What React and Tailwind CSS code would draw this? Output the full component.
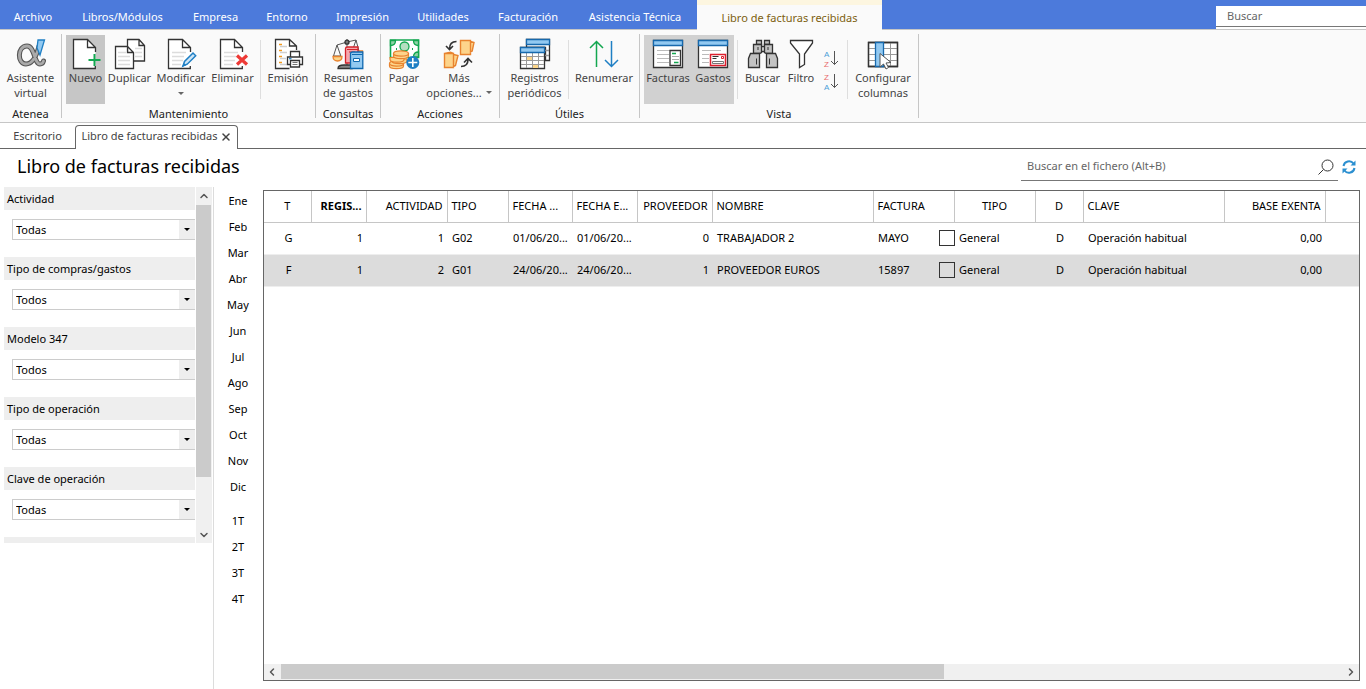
import { useState } from "react";
import { ChevronDown, ChevronLeft, ChevronRight, ChevronUp, X } from "lucide-react";

const INK = "#333333";
const BLUE = "#1f7fc4";
const SKY = "#92c9f1";
const GREEN = "#13a750";
const RED = "#ee3a36";
const ORANGE = "#e8832f";

function Svg({ children }) {
  return (
    <svg
      viewBox="0 0 32 32"
      className="h-8 w-8 shrink-0"
      fill="none"
      stroke={INK}
      strokeWidth="1.3"
      aria-hidden="true"
    >
      {children}
    </svg>
  );
}

function Sheet() {
  return (
    <>
      <path fill="#fff" stroke="none" d="M3.5 1.5h14l8 8v21h-22z" />
      <path d="M25.5 14V9.5l-8-8h-14v29h21.8v-2.5M17.5 1.5v8h8" />
      <path stroke="#dcdcdc" d="M7 14.5h14M7 18.5h12M7 22.500h11M7 26.500h9" />
    </>
  );
}

function AlphaIcon() {
  return (
    <Svg>
      <g fill="none" strokeLinecap="round">
        <path stroke="#555" strokeWidth="5" d="M24 8c-2 8-6 18-13 18-9 0-9-18 1-18 8 0 7 18 13 18 2 0 3-1 3.500-3" />
        <path stroke="#aaa" strokeWidth="2.800" d="M24 8c-2 8-6 18-13 18-9 0-9-18 1-18 8 0 7 18 13 18 2 0 3-1 3.500-3" />
      </g>
      <path d="M23 2h6.500l-4.500 15-3-7z" fill={SKY} stroke={BLUE} />
    </Svg>
  );
}

function NewIcon() {
  return (
    <Svg>
      <path fill="#fff" stroke="none" d="M3.500 1.500h14l8 8v21h-22z" />
      <path d="M25.500 14V9.500l-8-8h-14v29h21.800v-2.500M17.500 1.500v8h8" />
      <path stroke={GREEN} strokeWidth="2" d="M24.500 16v12M18.500 22h12" />
    </Svg>
  );
}

function CopyIcon() {
  return (
    <Svg>
      <path fill="#fff" d="M13.500 1.500H25l5.500 6v15.500h-17zM25 1.500v6h5.500" />
      <path fill="#fff" d="M1.500 8.500h12l6 6v16h-18zM13.500 8.500v6h6" />
      <path stroke="#dcdcdc" d="M4 14.500h8M4 18.500h12M4 22.500h12M4 26.500h12M21 10.500h7M21 14.500h7M21 18.500h7" />
    </Svg>
  );
}

function EditIcon() {
  return (
    <Svg>
      <Sheet />
      <path d="m18 28 1.500-4.500 8.500-8.500 2.700 2.700-8.500 8.500z" fill="#cfe6f7" stroke={BLUE} strokeWidth="1.500" />
      <path d="m18 28 2-1-1-1z" fill={BLUE} stroke={BLUE} />
    </Svg>
  );
}

function DeleteIcon() {
  return (
    <Svg>
      <Sheet />
      <path stroke={RED} strokeWidth="3.200" d="m20 17.500 10 9M30 17.500l-10 9" />
    </Svg>
  );
}

function PrintIcon() {
  return (
    <Svg>
      <path fill="#fff" stroke="none" d="M3.500 1.500h14l7 6.500v22.500h-21z" />
      <path d="M24.500 12V8l-7-6.500h-14v29h14M17.500 1.500V8h7" />
      <path stroke="#f39a1e" strokeWidth="1.500" d="M7 6.500h3M7 12.500h3M7 18.500h3M7 24.500h3" />
      <path stroke="#d0d0d0" d="M8 8.500h7M8 14.500h7M8 20.500h6M8 26.500h7" />
      <path fill="#fff" d="M18.500 19v-5.500h9V19M15.500 19h15v7.500h-15z" />
      <path fill="#fff" d="M18.500 22.500h9v6.500h-9z" />
      <path strokeWidth="1" stroke="#777" d="M20.500 24.500h5M20.500 26.500h5" />
      <path stroke={BLUE} d="M17 20.700h2.500" />
    </Svg>
  );
}

function BalanceIcon() {
  return (
    <Svg>
      <path d="M15 1v28M5 7l10-3 9-2M5 7 1.500 18h7.300zM24 2l-3 9M24 2l3.500 13" stroke="#555" strokeWidth="1" />
      <circle cx="15" cy="4.200" r="2" fill="#777" />
      <path d="M1 18.500h9c0 3-2 4.500-4.500 4.500S1 21.500 1 18.500z" fill="#fbd58a" stroke={ORANGE} />
      <path d="M6 30.500c0-3 3-3.500 6-3.500h8v3.500z" fill="#888" />
      <path d="M27 13h3.500v3" stroke={ORANGE} />
      <path d="M13.500 10.500c0-1 .8-1.500 2-1.500H26v16H13.500z" fill="#f6a6ab" stroke="#d3222a" />
      <path d="M15 11.500h11M17 14h6v3" stroke="#d3222a" strokeWidth="1" />
      <path d="M18.500 15.500c0-1 .8-1.500 2-1.500h10.300v16.500H18.500z" fill={SKY} stroke="#0f68b0" />
      <path d="M20 16.500h10.500" stroke="#0f68b0" strokeWidth="1" />
      <path d="M21.500 20.500h6v3h-6z" fill="#fff" stroke="#0f68b0" strokeWidth="1" />
    </Svg>
  );
}

function PayIcon() {
  return (
    <Svg>
      <path d="M2.500 2h28v17.500h-28z" fill="#fff" stroke={GREEN} strokeWidth="1.600" />
      <path d="M2.500 7.500c3 0 5-2 5-5h-5zM30.500 7.500c-3 0-5-2-5-5h5zM30.500 14c-3 0-5 2-5 5h5z" fill="#8fd3a6" stroke={GREEN} />
      <circle cx="16.500" cy="8.500" r="4.500" fill="#b5dfc1" stroke={GREEN} />
      <path d="M8 11h1M24 11h1" stroke={GREEN} strokeWidth="2" />
      <g fill="#fdd48b" stroke={ORANGE} strokeWidth="1.200">
        <path d="M1.500 26v2c0 3.500 14 3.500 14 0v-2z" />
        <ellipse cx="8.500" cy="25.500" rx="7" ry="2.600" />
        <path d="M4 21v2c0 3.500 15 3.500 15 0v-2z" />
        <path d="M2 19.500v2c0 3.500 14 3.500 14 0v-2z" />
        <path d="M5.500 15.500v2.500c0 3.500 15 3.500 15 0v-2.500z" />
        <ellipse cx="13" cy="15.500" rx="7.500" ry="2.700" />
      </g>
      <circle cx="24.800" cy="24.500" r="6.500" fill={BLUE} stroke="none" />
      <path d="M24.800 20v9M20.300 24.500h9" stroke="#fff" strokeWidth="1.600" />
    </Svg>
  );
}

function MoreIcon() {
  return (
    <Svg>
      <g fill="#fdd48b" stroke={ORANGE} strokeWidth="1.400">
        <path d="M17.500 2.500h10v14h-10zM27.500 3.500l3.500 1-1.800 8.500-1.700 1z" />
        <path d="M1.500 15.500h9v14h-9zM10.500 16.500l4.500 1-2.500 10-2 1zM1.500 15.500l6-1.200 3 1.200" />
      </g>
      <path d="M13.500 3.500C9 3.500 6.500 6 6.500 11M3 8l3.500 3.500L10 8M18 28.500c4.500 0 7-2 7-7M21 24.500l4-4 4 4" strokeWidth="1.600" />
    </Svg>
  );
}

function CalendarIcon() {
  return (
    <Svg>
      <path d="M7.500 1.500h23v21h-4v-13h-19z" fill="#fff" />
      <path d="M26 12.500h4M26 17.500h4" stroke="#999" />
      <path d="M7.500 1.500h23v5h-23z" fill={SKY} stroke="#1769ad" />
      <path d="M1.500 9.500h24v21h-24z" fill="#fff" />
      <path d="M8 22.500h5.500v-4H8zM14 30h5.500v-3.500H14z" fill="#fbd58a" stroke="none" />
      <path d="M2 18.500h23M2 22.500h23M2 26.500h23M7.500 15v15M13.500 15v15M19.500 15v15" stroke="#9a9a9a" strokeWidth="1" />
      <path d="M1.500 9.500h24v5h-24z" fill={SKY} stroke="#1769ad" />
    </Svg>
  );
}

function RenumberIcon() {
  return (
    <Svg>
      <path d="M8.500 29V3.500M2 10l6.500-6.500L15 10" stroke={GREEN} strokeWidth="1.500" />
      <path d="M23.500 3v25.500M17 22l6.500 6.500L30 22" stroke={BLUE} strokeWidth="1.500" />
    </Svg>
  );
}

function InvoiceWindowIcon() {
  return (
    <Svg>
      <path d="M1.500 2.500h29v27h-29z" fill="#fff" />
      <path d="M5 12.500h13M5 16.500h12M5 20.500h12M5 24.500h12" stroke="#bbb" strokeWidth="1" />
      <path d="M1.500 2.500h29v5h-29z" fill={SKY} stroke="#1769ad" />
      <path d="M18 12.500h10.500v15H18z" fill="#fff" />
      <path d="M20 15.500h4M22 24.500h4.500" stroke={GREEN} strokeWidth="1.500" />
      <path d="M20 18.500h7M20 21.500h7" stroke="#aaa" strokeWidth="1" />
    </Svg>
  );
}

function ExpenseWindowIcon() {
  return (
    <Svg>
      <path d="M1.500 2.500h29v27h-29z" fill="#fff" />
      <path d="M5 12.500h19M5 16.500h7M5 20.500h7M5 24.500h7" stroke="#bbb" strokeWidth="1" />
      <path d="M1.500 2.500h29v5h-29z" fill={SKY} stroke="#1769ad" />
      <path d="M13.500 16.500h15v11h-15z" fill="#fff" stroke="#dc1f2d" strokeWidth="1.500" />
      <path d="M15.500 18.500h6M15.500 20.500h4" strokeWidth="1" />
      <path d="M15.500 23.500h11v2h-11z" stroke="#777" strokeWidth="1" />
      <path d="M24.500 18.500h2v2h-2z" stroke="#dc1f2d" strokeWidth="1" />
    </Svg>
  );
}

function BinocularsIcon() {
  return (
    <Svg>
      <g fill="#c3c3c3">
        <path d="M9.500 2.500h5v4h-5zM17.500 2.500h5v4h-5z" />
        <path d="M14.500 8.500h3v5h-3z" fill="#fff" />
        <path d="M6.500 6.500h8v8l-2 1h-6zM17.500 6.500h8v9h-6l-2-1z" />
        <path d="M3.500 15.500h9v14h-11v-9zM19.500 15.500h9l2 5v9h-11z" />
      </g>
      <path d="M9.500 20.500v6M22.500 20.500v6M11 9v3M21 9v3" strokeWidth="1" />
    </Svg>
  );
}

function FunnelIcon() {
  return (
    <Svg>
      <path d="M5.500 2.500h22v2.500l-8 11v10.500l-5 3V16l-9-11z" fill="#fff" />
    </Svg>
  );
}

function ColumnsIcon() {
  return (
    <Svg>
      <path d="M1.500 4.500h29v24h-29z" fill="#fff" />
      <path d="M2 10.500h28M2 16.500h28M2 22.500h28M23.500 5v23" stroke="#999" strokeWidth="1" />
      <path d="M1.500 4.500h29v24h-29z" />
      <path d="M8.500 4.500h8v24h-8z" fill={SKY} stroke="#1769ad" />
      <path d="M13 15.500V29l3.500-3 2.500 5 2.500-1.500-2.500-4.500 5-.5z" fill="#fff" stroke="#555" strokeWidth="1" />
    </Svg>
  );
}

function SortIcon({ top, bottom }) {
  return (
    <svg viewBox="0 0 16 20" className="h-5 w-4" fill="none" aria-hidden="true">
      <g fontSize="8" fontFamily="Liberation Sans, sans-serif">
        <text x="1" y="8" fill={top === "A" ? "#4a9fd8" : "#e86a6a"}>
          {top}
        </text>
        <text x="1" y="18" fill={bottom === "A" ? "#4a9fd8" : "#e86a6a"}>
          {bottom}
        </text>
      </g>
      <path d="M11.500 2v13.500M8 12l3.500 3.500L15 12" stroke="#555" />
    </svg>
  );
}

function Caret() {
  return <span className="inline-block border-x-[3px] border-t-[3px] border-x-transparent border-t-[#666]" />;
}

function Tool({ icon, lines, width, caret, active }) {
  return (
    <button
      type="button"
      className={`flex h-[69px] flex-col items-center pt-[3px] text-[#444] ${width} ${active || ""}`}
    >
      {icon}
      {lines.map((line, i) => (
        <span key={line} className="flex h-[15px] items-center gap-1 whitespace-nowrap leading-[15px]">
          {line}
          {caret && i === 1 && <Caret />}
        </span>
      ))}
      {caret && lines.length === 1 && (
        <span className="flex h-4 items-center">
          <Caret />
        </span>
      )}
    </button>
  );
}

function Divider() {
  return <span className="mx-[3px] mt-[5px] h-[59px] w-px shrink-0 bg-[#dedede]" />;
}

function Group({ label, width, children }) {
  return (
    <section className={`flex shrink-0 flex-col border-r border-[#c6c6c6] ${width}`} aria-label={label}>
      <div className="flex h-[70px] pl-1 pt-px">{children}</div>
      <div className="text-center leading-[19px] text-[#222]">{label}</div>
    </section>
  );
}

const MENU = [
  ["Archivo", "w-[66px]"],
  ["Libros/Módulos", "w-[113px]"],
  ["Empresa", "w-[73px]"],
  ["Entorno", "w-[70px]"],
  ["Impresión", "w-[81px]"],
  ["Utilidades", "w-[80px]"],
  ["Facturación", "w-[90px]"],
  ["Asistencia Técnica", "w-[124px]"],
];

const FILTERS = [
  ["Actividad", "Todas"],
  ["Tipo de compras/gastos", "Todos"],
  ["Modelo 347", "Todos"],
  ["Tipo de operación", "Todas"],
  ["Clave de operación", "Todas"],
];

const MONTHS = ["Ene", "Feb", "Mar", "Abr", "May", "Jun", "Jul", "Ago", "Sep", "Oct", "Nov", "Dic"];
const QUARTERS = ["1T", "2T", "3T", "4T"];

const COLUMNS = [
  { title: "T", width: "w-[47px]", align: "text-center" },
  { title: "REGIS...", width: "w-[55px]", align: "text-right", bold: true },
  { title: "ACTIVIDAD", width: "w-[81px]", align: "text-right" },
  { title: "TIPO", width: "w-[61px]", align: "text-left" },
  { title: "FECHA ...", width: "w-[64px]", align: "text-left" },
  { title: "FECHA E...", width: "w-[65px]", align: "text-left" },
  { title: "PROVEEDOR", width: "w-[75px]", align: "text-right" },
  { title: "NOMBRE", width: "w-[161px]", align: "text-left" },
  { title: "FACTURA", width: "w-[81px]", align: "text-left" },
  { title: "TIPO", width: "w-[81px]", align: "text-center" },
  { title: "D", width: "w-12", align: "text-center" },
  { title: "CLAVE", width: "w-[141px]", align: "text-left" },
  { title: "BASE EXENTA", width: "w-[101px]", align: "text-right" },
];

const ROWS = [
  ["G", "1", "1", "G02", "01/06/20...", "01/06/20...", "0", "TRABAJADOR 2", "MAYO", "General", "D", "Operación habitual", "0,00"],
  ["F", "1", "2", "G01", "24/06/20...", "24/06/20...", "1", "PROVEEDOR EUROS", "15897", "General", "D", "Operación habitual", "0,00"],
];

function MenuBar() {
  return (
    <header className="flex h-[30px] border-b border-[#c6c6c6] bg-[#4c7adb] text-[11px] text-white">
      <nav className="flex">
        {MENU.map(([name, width]) => (
          <button key={name} type="button" className={`shrink-0 whitespace-nowrap pt-[6px] ${width}`}>
            {name}
          </button>
        ))}
        <button
          type="button"
          className="-mb-px w-[185px] shrink-0 whitespace-nowrap border-t-[5px] border-[#fdf6e0] bg-[#fafafa] pt-px text-[#7d5f10]"
        >
          Libro de facturas recibidas
        </button>
      </nav>
      <div className="ml-auto mt-[6px] w-[150px] bg-white">
        <input
          type="text"
          aria-label="Buscar"
          placeholder="Buscar"
          className="block h-[21px] w-full border-b border-[#777] px-[11px] pb-[2px] outline-none placeholder:text-[#666]"
        />
      </div>
    </header>
  );
}

function Ribbon() {
  return (
    <div className="flex h-[93px] border-b border-[#c6c6c6] bg-[#fafafa] pb-1 pt-1 text-[11px]">
      <Group label="Atenea" width="w-[62px]">
        <Tool icon={<AlphaIcon />} lines={["Asistente", "virtual"]} width="w-[53px]" />
      </Group>
      <Group label="Mantenimiento" width="w-[254px]">
        <Tool icon={<NewIcon />} lines={["Nuevo"]} width="w-[39px]" active="bg-[#c6c6c6]" />
        <Tool icon={<CopyIcon />} lines={["Duplicar"]} width="w-[49px]" />
        <Tool icon={<EditIcon />} lines={["Modificar"]} width="w-[54px]" caret />
        <Tool icon={<DeleteIcon />} lines={["Eliminar"]} width="w-[49px]" />
        <Divider />
        <Tool icon={<PrintIcon />} lines={["Emisión"]} width="w-[48px]" />
      </Group>
      <Group label="Consultas" width="w-[65px]">
        <Tool icon={<BalanceIcon />} lines={["Resumen", "de gastos"]} width="w-[56px]" />
      </Group>
      <Group label="Acciones" width="w-[119px]">
        <Tool icon={<PayIcon />} lines={["Pagar"]} width="w-[38px]" />
        <Tool icon={<MoreIcon />} lines={["Más", "opciones..."]} width="w-[72px]" caret />
      </Group>
      <Group label="Útiles" width="w-[140px]">
        <Tool icon={<CalendarIcon />} lines={["Registros", "periódicos"]} width="w-[61px]" />
        <Divider />
        <Tool icon={<RenumberIcon />} lines={["Renumerar"]} width="w-[64px]" />
      </Group>
      <Group label="Vista" width="w-[279px]">
        <Tool icon={<InvoiceWindowIcon />} lines={["Facturas"]} width="w-12" active="bg-[#d1d1d1]" />
        <Tool icon={<ExpenseWindowIcon />} lines={["Gastos"]} width="w-[42px]" active="bg-[#d1d1d1]" />
        <Divider />
        <Tool icon={<BinocularsIcon />} lines={["Buscar"]} width="w-[43px]" />
        <Tool icon={<FunnelIcon />} lines={["Filtro"]} width="w-[34px]" />
        <div className="flex w-[26px] flex-col items-center gap-[3px] pt-[14px]">
          <button type="button" aria-label="Orden ascendente">
            <SortIcon top="A" bottom="Z" />
          </button>
          <button type="button" aria-label="Orden descendente">
            <SortIcon top="Z" bottom="A" />
          </button>
        </div>
        <Divider />
        <Tool icon={<ColumnsIcon />} lines={["Configurar", "columnas"]} width="w-[64px]" />
      </Group>
    </div>
  );
}

function DocumentTabs() {
  return (
    <div className="flex h-[26px] border-b border-[#666] pt-[2px] text-[11px] text-[#444]">
      <button type="button" className="w-[75px] pb-px">
        Escritorio
      </button>
      <div className="-mb-px flex w-[163px] items-center justify-center gap-[2px] rounded-t border border-b-0 border-[#666] bg-white">
        <button type="button" className="whitespace-nowrap pb-[2px]">
          Libro de facturas recibidas
        </button>
        <button type="button" aria-label="Cerrar" className="pb-px">
          <X size={12} strokeWidth={3} />
        </button>
      </div>
    </div>
  );
}

function TitleRow() {
  return (
    <div className="flex h-[38px] items-start justify-between pl-[17px] pr-[9px]">
      <h1 className="pt-1 text-[18px] leading-[26px]">Libro de facturas recibidas</h1>
      <div className="flex items-center pt-1">
        <label className="mr-[3px] flex h-7 w-[317px] items-center border-b border-[#777] pl-[6px] pr-1">
          <input
            type="text"
            aria-label="Buscar en el fichero"
            placeholder="Buscar en el fichero (Alt+B)"
            className="min-w-0 flex-1 text-[11px] outline-none placeholder:text-[#666]"
          />
          <svg viewBox="0 0 16 16" className="h-4 w-4" fill="none" stroke="#333" aria-hidden="true">
            <circle cx="9.500" cy="6.500" r="5.500" />
            <path d="M5.500 10.500.5 15.500" />
          </svg>
        </label>
        <button type="button" aria-label="Actualizar">
          <svg viewBox="0 0 16 16" className="h-4 w-4" fill="none" stroke="#2b8fd0" strokeWidth="2" aria-hidden="true">
            <path d="M2.500 7a5.600 5.600 0 0 1 10-2.500M13.500 9a5.600 5.600 0 0 1-10 2.500" />
            <path d="M14.500 1.500v5h-5zM1.500 14.500v-5h5z" fill="#2b8fd0" stroke="none" />
          </svg>
        </button>
      </div>
    </div>
  );
}

function Filters() {
  return (
    <aside className="w-[214px] shrink-0 border-r border-[#dcdcdc] pl-1 text-[11px]">
      <div className="flex h-[356px]">
        <div className="w-[191px] overflow-hidden">
          {FILTERS.map(([name, value]) => (
            <div key={name} className="h-[70px]">
              <label htmlFor={name} className="block h-[23px] bg-[#eee] pl-[3px] leading-[23px]">
                {name}
              </label>
              <div className="relative ml-2 mt-[9px]">
                <select
                  id={name}
                  defaultValue={value}
                  className="block h-[21px] w-full appearance-none border border-r-0 border-[#ccc] bg-white pl-[3px] pt-px outline-none"
                >
                  <option>{value}</option>
                </select>
                <span className="pointer-events-none absolute inset-y-px right-0 flex w-4 items-center justify-center bg-[#eee]">
                  <span className="border-x-[3px] border-t-[3px] border-x-transparent border-t-black" />
                </span>
              </div>
            </div>
          ))}
          <div className="h-[6px] bg-[#eee]" />
        </div>
        <div className="ml-px flex w-4 flex-col items-center bg-[#f0f0f0] text-[#555]">
          <ChevronUp size={12} strokeWidth={3} className="my-[3px] shrink-0" />
          <div className="mr-px h-[272px] w-[15px] bg-[#cbcbcb]" />
          <ChevronDown size={12} strokeWidth={3} className="mb-[2px] mt-auto shrink-0" />
        </div>
      </div>
    </aside>
  );
}

function Periods() {
  return (
    <div className="flex w-[49px] shrink-0 flex-col pr-px pt-px text-[11px]">
      {MONTHS.map((m) => (
        <button key={m} type="button" className="h-[26px]">
          {m}
        </button>
      ))}
      <div className="flex flex-col pt-2">
        {QUARTERS.map((q) => (
          <button key={q} type="button" className="h-[26px]">
            {q}
          </button>
        ))}
      </div>
    </div>
  );
}

function Cell({ column, value, label }) {
  if (value !== "General") return value;
  return (
    <label className="-ml-5 flex items-center gap-1">
      <input
        type="checkbox"
        aria-label={`${label} ${column.title}`}
        className="h-4 w-4 appearance-none border border-[#333] checked:bg-[#333]"
      />
      {value}
    </label>
  );
}

function InvoiceTable() {
  const [selected, setSelected] = useState(1);

  return (
    <div className="mb-2 mr-[6px] mt-[3px] flex min-w-0 flex-1 flex-col border border-[#666] bg-white">
      <div className="flex-1 overflow-hidden">
        <table className="w-full table-fixed border-collapse text-[11px]">
          <thead>
            <tr className="h-[31px] border-b border-[#c6c6c6]">
              {COLUMNS.map((c, i) => (
                <th
                  key={i}
                  className={`whitespace-nowrap border-r border-[#c6c6c6] px-1 ${c.width} ${c.align} ${c.bold ? "font-bold" : "font-normal"}`}
                >
                  {c.title}
                </th>
              ))}
              <th />
            </tr>
          </thead>
          <tbody>
            {ROWS.map((row, r) => (
              <tr
                key={r}
                onClick={() => setSelected(r)}
                className={`h-8 border-b border-[#eee] ${selected === r ? "bg-[#dcdcdc]" : "bg-white"}`}
              >
                {row.map((value, i) => (
                  <td key={i} className={`whitespace-nowrap pl-[5px] pr-[3px] ${COLUMNS[i].align}`}>
                    <Cell column={COLUMNS[i]} value={value} label={row[7]} />
                  </td>
                ))}
                <td />
              </tr>
            ))}
          </tbody>
        </table>
      </div>
      <div className="flex h-4 items-center bg-[#f0f0f0] px-[2px] text-[#555]">
        <ChevronLeft size={12} strokeWidth={3} className="mr-[3px] shrink-0" />
        <div className="flex h-full flex-1">
          <div className="h-[15px] w-5/8 bg-[#cbcbcb]" />
        </div>
        <ChevronRight size={12} strokeWidth={3} className="ml-[3px] shrink-0" />
      </div>
    </div>
  );
}

export default function App() {
  return (
    <div className="flex min-h-screen flex-col overflow-hidden bg-white font-['Noto_Sans',sans-serif] text-black">
      <MenuBar />
      <Ribbon />
      <DocumentTabs />
      <TitleRow />
      <main className="flex flex-1">
        <Filters />
        <Periods />
        <InvoiceTable />
      </main>
    </div>
  );
}
